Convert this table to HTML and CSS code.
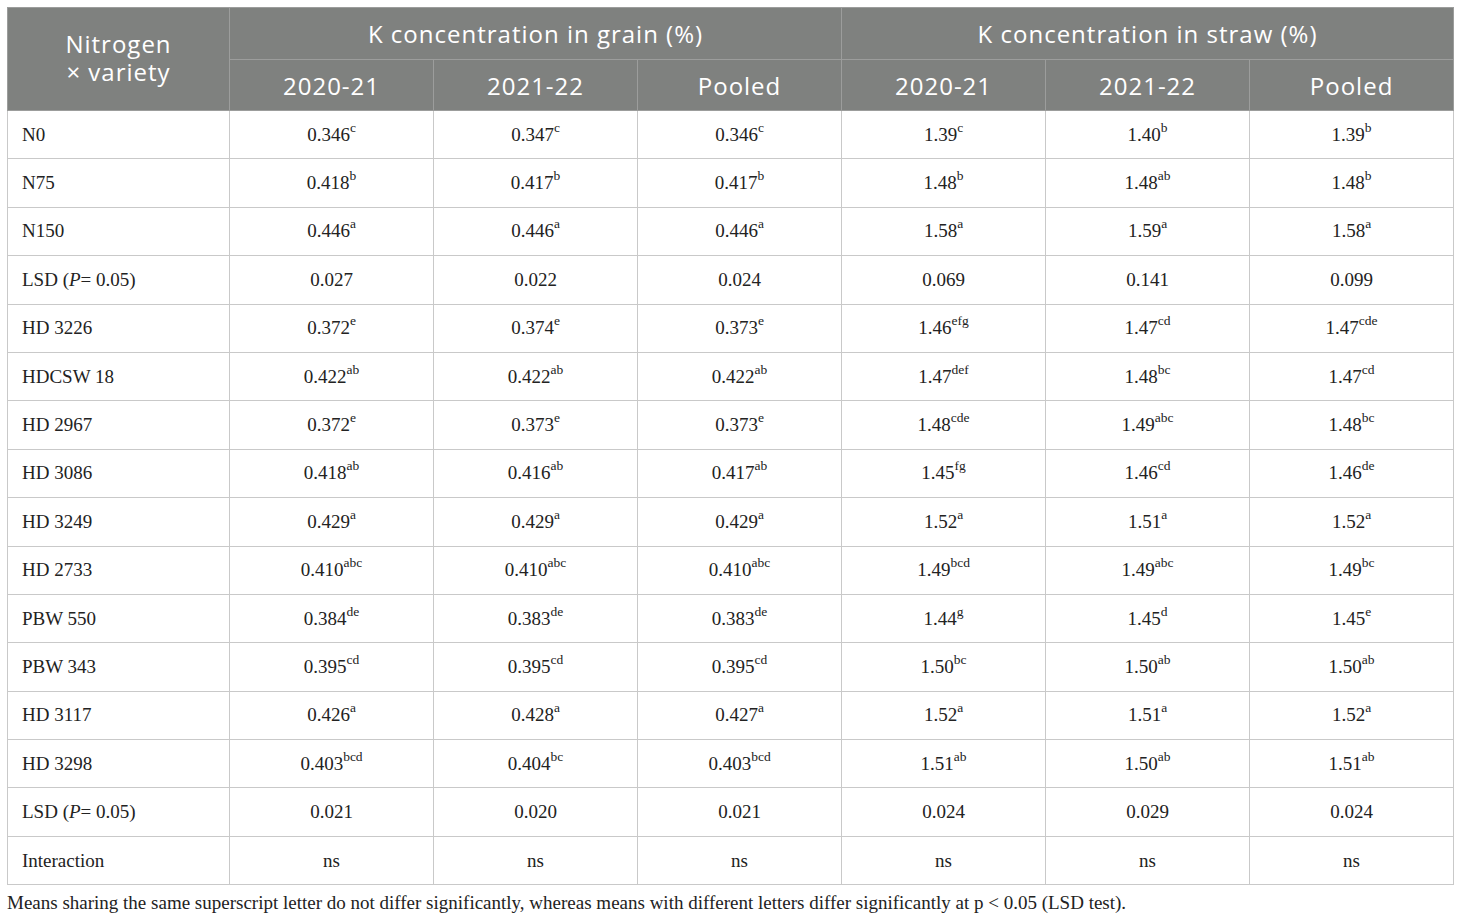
FILE: index.html
```html
<!doctype html>
<html lang="en">
  <head>
    <meta charset="UTF-8" />
    <title>K concentration in grain and straw</title>
    <link rel="stylesheet" href="styles.css">
  </head>
  <body>
    <div class="table-wrap">
      <table class="data-table">
        <colgroup>
          <col class="col-label" />
          <col span="6" class="col-value" />
        </colgroup>
        <thead>
          <tr class="head-top">
            <th rowspan="2" class="head-label">
              <span class="head-line">Nitrogen</span>
              <span class="head-line">× variety</span>
            </th>
            <th colspan="3">K concentration in grain (%)</th>
            <th colspan="3">K concentration in straw (%)</th>
          </tr>
          <tr class="head-sub">
            <th>2020-21</th>
            <th>2021-22</th>
            <th>Pooled</th>
            <th>2020-21</th>
            <th>2021-22</th>
            <th>Pooled</th>
          </tr>
        </thead>
        <tbody>
          <tr>
            <td>N0</td>
            <td>0.346<sup>c</sup></td><td>0.347<sup>c</sup></td><td>0.346<sup>c</sup></td>
            <td>1.39<sup>c</sup></td><td>1.40<sup>b</sup></td><td>1.39<sup>b</sup></td>
          </tr>
          <tr>
            <td>N75</td>
            <td>0.418<sup>b</sup></td><td>0.417<sup>b</sup></td><td>0.417<sup>b</sup></td>
            <td>1.48<sup>b</sup></td><td>1.48<sup>ab</sup></td><td>1.48<sup>b</sup></td>
          </tr>
          <tr>
            <td>N150</td>
            <td>0.446<sup>a</sup></td><td>0.446<sup>a</sup></td><td>0.446<sup>a</sup></td>
            <td>1.58<sup>a</sup></td><td>1.59<sup>a</sup></td><td>1.58<sup>a</sup></td>
          </tr>
          <tr>
            <td>LSD (<i>P</i>= 0.05)</td>
            <td>0.027</td><td>0.022</td><td>0.024</td>
            <td>0.069</td><td>0.141</td><td>0.099</td>
          </tr>
          <tr>
            <td>HD 3226</td>
            <td>0.372<sup>e</sup></td><td>0.374<sup>e</sup></td><td>0.373<sup>e</sup></td>
            <td>1.46<sup>efg</sup></td><td>1.47<sup>cd</sup></td><td>1.47<sup>cde</sup></td>
          </tr>
          <tr>
            <td>HDCSW 18</td>
            <td>0.422<sup>ab</sup></td><td>0.422<sup>ab</sup></td><td>0.422<sup>ab</sup></td>
            <td>1.47<sup>def</sup></td><td>1.48<sup>bc</sup></td><td>1.47<sup>cd</sup></td>
          </tr>
          <tr>
            <td>HD 2967</td>
            <td>0.372<sup>e</sup></td><td>0.373<sup>e</sup></td><td>0.373<sup>e</sup></td>
            <td>1.48<sup>cde</sup></td><td>1.49<sup>abc</sup></td><td>1.48<sup>bc</sup></td>
          </tr>
          <tr>
            <td>HD 3086</td>
            <td>0.418<sup>ab</sup></td><td>0.416<sup>ab</sup></td><td>0.417<sup>ab</sup></td>
            <td>1.45<sup>fg</sup></td><td>1.46<sup>cd</sup></td><td>1.46<sup>de</sup></td>
          </tr>
          <tr>
            <td>HD 3249</td>
            <td>0.429<sup>a</sup></td><td>0.429<sup>a</sup></td><td>0.429<sup>a</sup></td>
            <td>1.52<sup>a</sup></td><td>1.51<sup>a</sup></td><td>1.52<sup>a</sup></td>
          </tr>
          <tr>
            <td>HD 2733</td>
            <td>0.410<sup>abc</sup></td><td>0.410<sup>abc</sup></td><td>0.410<sup>abc</sup></td>
            <td>1.49<sup>bcd</sup></td><td>1.49<sup>abc</sup></td><td>1.49<sup>bc</sup></td>
          </tr>
          <tr>
            <td>PBW 550</td>
            <td>0.384<sup>de</sup></td><td>0.383<sup>de</sup></td><td>0.383<sup>de</sup></td>
            <td>1.44<sup>g</sup></td><td>1.45<sup>d</sup></td><td>1.45<sup>e</sup></td>
          </tr>
          <tr>
            <td>PBW 343</td>
            <td>0.395<sup>cd</sup></td><td>0.395<sup>cd</sup></td><td>0.395<sup>cd</sup></td>
            <td>1.50<sup>bc</sup></td><td>1.50<sup>ab</sup></td><td>1.50<sup>ab</sup></td>
          </tr>
          <tr>
            <td>HD 3117</td>
            <td>0.426<sup>a</sup></td><td>0.428<sup>a</sup></td><td>0.427<sup>a</sup></td>
            <td>1.52<sup>a</sup></td><td>1.51<sup>a</sup></td><td>1.52<sup>a</sup></td>
          </tr>
          <tr>
            <td>HD 3298</td>
            <td>0.403<sup>bcd</sup></td><td>0.404<sup>bc</sup></td><td>0.403<sup>bcd</sup></td>
            <td>1.51<sup>ab</sup></td><td>1.50<sup>ab</sup></td><td>1.51<sup>ab</sup></td>
          </tr>
          <tr>
            <td>LSD (<i>P</i>= 0.05)</td>
            <td>0.021</td><td>0.020</td><td>0.021</td>
            <td>0.024</td><td>0.029</td><td>0.024</td>
          </tr>
          <tr>
            <td>Interaction</td>
            <td>ns</td><td>ns</td><td>ns</td>
            <td>ns</td><td>ns</td><td>ns</td>
          </tr>
        </tbody>
      </table>
      <p class="footnote">Means sharing the same superscript letter do not differ significantly, whereas means with different letters differ significantly at p &lt; 0.05 (LSD test).</p>
    </div>
  </body>
</html>
```

FILE: styles.css
```css
/* Base */
body {
  margin: 0;
  padding: 0;
  background-color: #fff;
  color: #222;
  font-family: "Liberation Serif", "Times New Roman", serif;
}

.table-wrap {
  padding: 7px 7px 0 7px;
}

/* Table */
.data-table {
  width: 1447px;
  table-layout: fixed;
  border-collapse: collapse;
  border: 1px solid #c9c9c9;
}

.col-label {
  width: 222px;
}

.col-value {
  width: 204px;
}

/* Header - gray band with white sans text */
.data-table th {
  background-color: #7f817f;
  color: #fff;
  font-family: "Open Sans", "Noto Sans", sans-serif;
  font-weight: 400;
  font-size: 24px;
  letter-spacing: 1px;
  text-align: center;
  padding: 0;
  border: 1px solid #9c9d9c;
}

.head-top th {
  height: 51px;
}

.head-sub th {
  height: 50px;
}

.data-table th.head-label {
  padding-bottom: 2px;
}

.head-line {
  display: block;
  line-height: 28px;
}

/* Body cells */
.data-table td {
  height: 47.4px;
  padding: 0;
  font-size: 19px;
  text-align: center;
  border: 1px solid #c9c9c9;
}

.data-table td:first-child {
  text-align: left;
  padding-left: 14px;
}

.data-table sup {
  font-size: 13.5px;
  line-height: 0;
  vertical-align: 9px;
}

/* Footnote */
.footnote {
  margin: 7px 0 0 0;
  font-size: 19px;
  color: #222;
}
```
